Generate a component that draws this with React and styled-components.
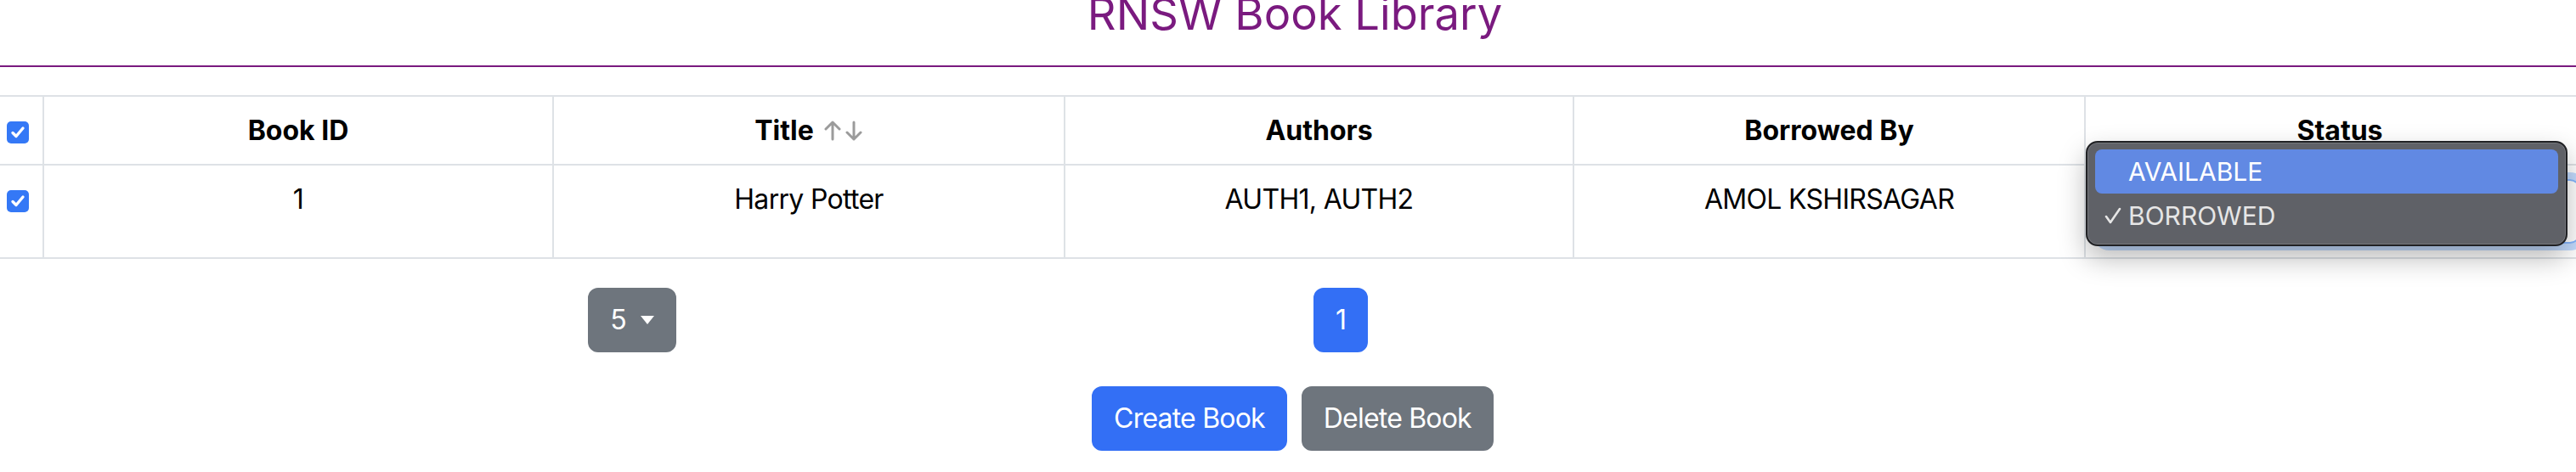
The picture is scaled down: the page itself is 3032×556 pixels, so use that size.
import React from 'react'
import styled, { createGlobalStyle } from 'styled-components'

const GlobalStyle = createGlobalStyle`
  html, body {
    margin: 0;
    padding: 0;
    background: #fff;
    overflow: hidden;
  }
  body {
    font-family: Inter, "Liberation Sans", sans-serif;
    color: #000;
  }
  *, *::before, *::after {
    box-sizing: border-box;
  }
`

const Page = styled.div`
  width: 3032px;
  height: 556px;
  overflow: hidden;
`

const Heading = styled.h1`
  margin: -15px 0 0;
  padding-left: 16px;
  font-size: 52.5px;
  line-height: 62px;
  font-weight: 400;
  text-align: center;
  color: #7a1a7f;
`

const Rule = styled.hr`
  margin: 30px 0 0;
  border: none;
  border-top: 2px solid #7a1a7f;
`

const Table = styled.table`
  margin-top: 33px;
  border-collapse: collapse;
  table-layout: fixed;
  width: 3054px;
`

const Col = styled.col`
  width: ${({ w }) => w}px;
`

const HeadCell = styled.th`
  border: 2px solid #dee2e6;
  padding: 16px 16px 15px;
  font-size: 32px;
  line-height: 48px;
  font-weight: 700;
  text-align: center;
  vertical-align: middle;
  &:first-child {
    border-left: none;
    padding: 16px 0 15px 8px;
    text-align: left;
  }
`

const Cell = styled.td`
  border: 2px solid #dee2e6;
  padding: 16px;
  font-size: 32px;
  line-height: 48px;
  letter-spacing: -0.7px;
  text-align: center;
  vertical-align: top;
  &:first-child {
    border-left: none;
    padding: 16px 0 16px 8px;
    text-align: left;
  }
`

const Check = styled.span`
  display: inline-flex;
  align-items: center;
  justify-content: center;
  width: 26px;
  height: 26px;
  border-radius: 5px;
  background: #3478f6;
  vertical-align: middle;
`

const TitleLabel = styled.span`
  display: inline-flex;
  align-items: center;
  gap: 12px;
`

const SelectWrap = styled.div`
  position: relative;
`

const StatusSelect = styled.div`
  height: 76px;
  border: 2px solid #86b7fe;
  border-radius: 12px;
  box-shadow: 0 0 0 8px rgba(13, 110, 253, 0.25);
  font-size: 32px;
  line-height: 72px;
  text-align: left;
  padding-left: 24px;
`

const Popup = styled.div`
  position: absolute;
  left: -16px;
  top: -45px;
  width: 567px;
  padding: 8px 9px;
  background: #5f6167;
  border: 2px solid #202124;
  border-radius: 14px;
  box-shadow: inset 0 0 0 1px rgba(255, 255, 255, 0.14), 0 14px 32px rgba(0, 0, 0, 0.28);
  letter-spacing: 0;
  z-index: 2;
`

const Option = styled.div`
  display: flex;
  align-items: center;
  height: 52px;
  border-radius: 8px;
  font-size: 30px;
  color: ${({ active }) => (active ? '#fff' : '#e6e6e6')};
  background: ${({ active }) => (active ? '#6189e3' : 'transparent')};
`

const Tick = styled.span`
  display: flex;
  align-items: center;
  width: 39px;
  padding-left: 11px;
`

const PagerRow = styled.div`
  display: grid;
  grid-template-columns: 1fr 1fr;
  width: 3032px;
  margin-top: 34px;
`

const SizeCell = styled.div`
  display: flex;
  justify-content: center;
  padding-right: 28px;
`

const PagesCell = styled.div`
  display: flex;
  padding-left: 30px;
`

const Button = styled.button`
  display: inline-flex;
  align-items: center;
  gap: 17px;
  padding: 12px 24px;
  font-family: Inter, "Liberation Sans", sans-serif;
  font-size: 32px;
  line-height: 48px;
  letter-spacing: -0.8px;
  color: #fff;
  background: ${({ variant }) => (variant === 'primary' ? '#336ff5' : '#6e757d')};
  border: 2px solid ${({ variant }) => (variant === 'primary' ? '#336ff5' : '#6e757d')};
  border-radius: 12px;
`

const Caret = styled.span`
  width: 0;
  height: 0;
  border-top: 10px solid #fff;
  border-left: 8px solid transparent;
  border-right: 8px solid transparent;
`

const Actions = styled.div`
  display: flex;
  justify-content: center;
  gap: 17px;
  margin-top: 40px;
  padding-left: 11px;
`

const CheckBox = () => (
  <Check>
    <svg width="20" height="20" viewBox="0 0 20 20">
      <path d="M4 10.5 L8 14.5 L16 5" fill="none" stroke="#fff" strokeWidth="3.4" strokeLinecap="round" strokeLinejoin="round" />
    </svg>
  </Check>
)

const SortIcon = () => (
  <svg width="46" height="24" viewBox="0 0 46 24">
    <g fill="none" stroke="#9b9b9b" strokeWidth="3" strokeLinecap="round" strokeLinejoin="round">
      <path d="M10 22V2M2 10l8-8 8 8" />
      <path d="M35 2v20M27 14l8 8 8-8" />
    </g>
  </svg>
)

const TickMark = () => (
  <svg width="20" height="20" viewBox="0 0 20 20">
    <path d="M2 11 L7 18 L18 2" fill="none" stroke="#e6e6e6" strokeWidth="2.6" strokeLinecap="round" strokeLinejoin="round" />
  </svg>
)

const columns = [51, 600, 602, 599, 602, 600]

export default function App() {
  return (
    <Page>
      <GlobalStyle />
      <Heading>RNSW Book Library</Heading>
      <Rule />
      <Table>
        <colgroup>
          {columns.map((w, i) => <Col key={i} w={w} />)}
        </colgroup>
        <thead>
          <tr>
            <HeadCell><CheckBox /></HeadCell>
            <HeadCell>Book ID</HeadCell>
            <HeadCell>
              <TitleLabel>Title <SortIcon /></TitleLabel>
            </HeadCell>
            <HeadCell>Authors</HeadCell>
            <HeadCell>Borrowed By</HeadCell>
            <HeadCell>Status</HeadCell>
          </tr>
        </thead>
        <tbody>
          <tr>
            <Cell><CheckBox /></Cell>
            <Cell>1</Cell>
            <Cell>Harry Potter</Cell>
            <Cell>AUTH1, AUTH2</Cell>
            <Cell>AMOL KSHIRSAGAR</Cell>
            <Cell>
              <SelectWrap>
                <StatusSelect>BORROWED</StatusSelect>
                <Popup>
                  <Option active><Tick />AVAILABLE</Option>
                  <Option><Tick><TickMark /></Tick>BORROWED</Option>
                </Popup>
              </SelectWrap>
            </Cell>
          </tr>
        </tbody>
      </Table>
      <PagerRow>
        <SizeCell>
          <Button variant="secondary">5 <Caret /></Button>
        </SizeCell>
        <PagesCell>
          <Button variant="primary">1</Button>
        </PagesCell>
      </PagerRow>
      <Actions>
        <Button variant="primary">Create Book</Button>
        <Button variant="secondary">Delete Book</Button>
      </Actions>
    </Page>
  )
}
